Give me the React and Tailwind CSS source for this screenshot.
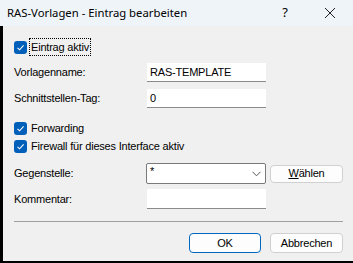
import React from "react";

function Check({ label, focus }) {
  return (
    <div className="flex items-center h-[18px]">
      <div className="w-[13px] h-[13px] rounded-[3px] bg-[#005fb8] flex items-center justify-center">
        <svg width="9" height="9" viewBox="0 0 9 9">
          <path d="M1.5 4.8 L3.6 6.8 L7.6 2.4" fill="none" stroke="white" strokeWidth="1.1" />
        </svg>
      </div>
      <span
        className={
          "ml-[3px] px-[1px] leading-[16px] " +
          (focus ? "outline outline-1 outline-dotted outline-black" : "")
        }
      >
        {label}
      </span>
    </div>
  );
}

function Input({ value, h = "h-[19px]" }) {
  return (
    <div className={`w-[119px] ${h} bg-white border-b border-[#8a8a8a] flex items-center px-[3px] text-black`}>
      {value}
    </div>
  );
}

export default function App() {
  return (
    <div
      className="w-[353px] h-[263px] flex flex-col text-[11px] tracking-[-0.2px] text-black"
      style={{ fontFamily: '"Liberation Sans", Arial, sans-serif' }}
    >
      <div className="h-[26px] bg-[#eff4f9] flex items-center pl-[7px] shrink-0 tracking-normal">
        <span className="text-[11.3px] text-black" style={{ fontFamily: '"Noto Sans", "Open Sans", sans-serif' }}>
          RAS-Vorlagen - Eintrag bearbeiten
        </span>
        <span className="ml-auto text-[13px] mr-[36px]" style={{ fontFamily: '"Noto Sans", sans-serif' }}>?</span>
        <svg width="12" height="12" viewBox="0 0 12 12" className="mr-[17px]">
          <path d="M1 1 L11 11 M11 1 L1 11" stroke="#222" strokeWidth="1" />
        </svg>
      </div>
      <div className="flex-1 bg-[#f0f0f0] border-l-[3px] border-b-2 border-black flex flex-col pl-[11px] pr-[10px]">
        <div className="mt-[12px]">
          <Check label="Eintrag aktiv" focus />
        </div>
        <div className="mt-[7px] flex items-center">
          <span className="w-[133px]">Vorlagenname:</span>
          <Input value="RAS-TEMPLATE" />
        </div>
        <div className="mt-[7px] flex items-center">
          <span className="w-[133px]">Schnittstellen-Tag:</span>
          <Input value="0" />
        </div>
        <div className="mt-[11px]">
          <Check label="Forwarding" />
        </div>
        <div className="mt-[0px]">
          <Check label="Firewall für dieses Interface aktiv" />
        </div>
        <div className="mt-[8px] flex items-center">
          <span className="w-[132px]">Gegenstelle:</span>
          <div className="w-[120px] h-[21px] bg-white border border-[#7a7a7a] rounded-[2px] flex items-center pl-[3px] pr-[4px]">
            <span className="leading-none -mt-[4px]">*</span>
            <svg width="9" height="6" viewBox="0 0 9 6" className="ml-auto">
              <path d="M0.5 0.8 L4.5 4.8 L8.5 0.8" fill="none" stroke="#555" strokeWidth="1" />
            </svg>
          </div>
          <div className="ml-[4px] w-[73px] h-[18px] bg-[#fdfdfd] border border-[#d0d0d0] rounded-[4px] flex items-center justify-center">
            <span><span className="underline">W</span>ählen</span>
          </div>
        </div>
        <div className="mt-[5px] flex items-center">
          <span className="w-[133px]">Kommentar:</span>
          <Input value="" h="h-[20px]" />
        </div>
        <div className="mt-[12px] h-px bg-[#a0a0a0]" />
        <div className="mt-[11px] flex justify-end gap-[9px]">
          <div className="w-[72px] h-[20px] bg-[#fdfdfd] border border-[#0067c0] rounded-[4px] flex items-center justify-center">
            OK
          </div>
          <div className="w-[73px] h-[20px] bg-[#fdfdfd] border border-[#d0d0d0] rounded-[4px] flex items-center justify-center">
            Abbrechen
          </div>
        </div>
      </div>
    </div>
  );
}
